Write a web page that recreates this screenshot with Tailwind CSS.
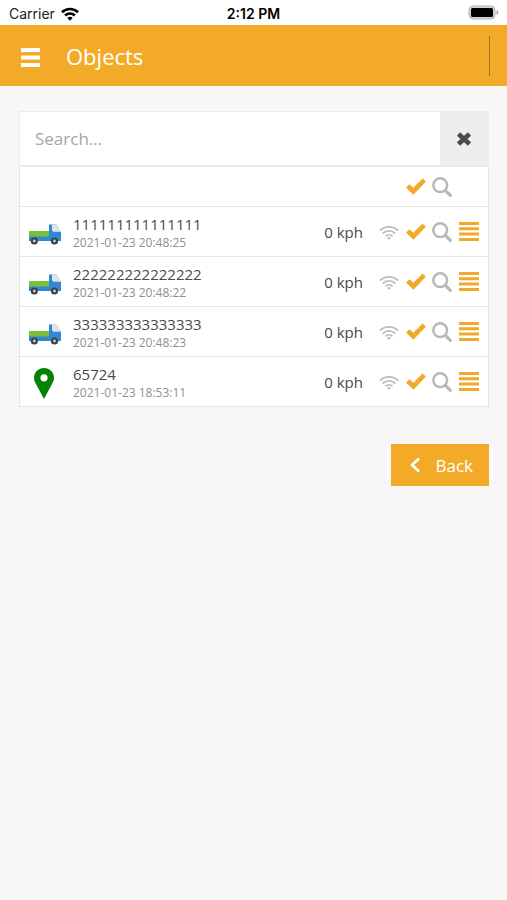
<!DOCTYPE html>
<html lang="en">
<head>
<meta charset="utf-8">
<meta name="viewport" content="width=device-width, initial-scale=1">
<title>Objects</title>
<script src="https://cdn.jsdelivr.net/npm/@tailwindcss/browser@4"></script>
</head>
<body class="min-h-screen bg-[#f7f7f7] font-['Open_Sans',sans-serif] text-[#4a4a4a]">

<svg class="hidden" aria-hidden="true">
  <symbol id="check" viewBox="0 0 20 17"><path d="M0.6 9.600 3.400 6.800 7.300 10.200 16.600 1 19.400 3.700 7.400 16.200Z" fill="#f2a929" stroke="#f2a929" stroke-width="1" stroke-linejoin="round"/></symbol>
  <symbol id="find" viewBox="0 0 20 20"><circle cx="8.2" cy="8.2" r="6.9" fill="none" stroke="#b8b8b8" stroke-width="2.500"/><path d="m13.400 13.400 4.900 4.900" stroke="#b8b8b8" stroke-width="3.200" stroke-linecap="round"/></symbol>
  <symbol id="list" viewBox="0 0 20 19"><path d="M0 1.500h20M0 6.800h20M0 12.100h20M0 17.400h20" stroke="#f2a929" stroke-width="3"/></symbol>
  <symbol id="wifi" viewBox="0 0 20 15"><g fill="none" stroke="#bcbcbc" stroke-width="1.800"><path d="M.9 5.600a13 13 0 0 1 18.200 0"/><path d="M3.700 8.500a9 9 0 0 1 12.600 0"/><path d="M6.500 11.300a5 5 0 0 1 7 0"/></g><circle cx="10" cy="13.200" r="1.400" fill="#bcbcbc"/></symbol>
  <symbol id="truck" viewBox="0 0 34 22"><path d="M1 8h20v6H1Z" fill="#7cc03a"/><path d="M21 1.500h7.500l4.500 7.500v9H1v-4.500h20Z" fill="#2f88d6"/><path d="M24 1.500h4.700l4.300 7.300h-7.400Q24 8.400 24 6.800Z" fill="#dfe4e8"/><g fill="#3d4146"><circle cx="6.300" cy="18" r="3.600"/><circle cx="26.500" cy="18" r="3.600"/></g><g fill="#c9cdd0"><circle cx="6.300" cy="18" r="1.400"/><circle cx="26.500" cy="18" r="1.400"/></g></symbol>
  <symbol id="pin" viewBox="0 0 20 31"><path fill="#058205" fill-rule="evenodd" d="M10 0C4.400 0 0 4.300 0 9.800c0 2.300.8 4.200 2 6.200L10 31l8-15c1.200-2 2-3.900 2-6.200C20 4.300 15.600 0 10 0Zm0 6.200a3.600 3.600 0 1 1 0 7.200 3.600 3.600 0 0 1 0-7.200Z"/></symbol>
</svg>

<div class="grid h-[25px] grid-cols-3 items-center bg-white px-2 text-black">
  <div class="flex items-center gap-1.5 pt-0.5 pl-px font-[Inter,sans-serif] text-sm text-[#222]">
    <span>Carrier</span>
    <svg class="h-[14px] w-[18px]" viewBox="0 0 18 14" aria-label="Wi-Fi"><g fill="none" stroke="#000" stroke-width="2.6"><path d="M1 5.200a11.500 11.500 0 0 1 16 0"/><path d="M4.100 8.500a7 7 0 0 1 9.800 0"/></g><path d="M9 13.800 6.300 11a3.900 3.900 0 0 1 5.400 0Z"/></svg>
  </div>
  <div class="pt-0.5 text-center font-[Inter,sans-serif] text-sm font-semibold">2:12 PM</div>
  <svg class="h-[15px] w-[31px] justify-self-end" viewBox="0 0 31 15" aria-label="Battery"><rect x="1" y="1" width="26" height="13" rx="4" fill="#d4d4d4" stroke="#b4b4b4"/><rect x="3" y="3" width="22" height="9" rx="1.500"/><path d="M28.500 5c2.500.5 2.500 4.500 0 5Z" fill="#aaa"/></svg>
</div>

<header class="flex h-[61px] items-center bg-[#f4aa29] pr-[17px] pl-[21px] text-white">
  <button type="button" aria-label="Menu" class="flex items-center pt-1">
    <svg class="h-[19px] w-[19px]" viewBox="0 0 19 19"><path d="M0 2h19M0 9.500h19M0 17h19" stroke="#fff" stroke-width="3.800"/></svg>
  </button>
  <h1 class="ml-[26px] flex-1 text-[22px] leading-8">Objects</h1>
  <div class="h-10 w-px bg-[#a3741f]"></div>
</header>

<main class="pt-[25px] pr-[18px] pl-[19px]">
  <form class="flex h-[56px] border border-b-2 border-[#ebebeb] bg-white">
    <input type="text" aria-label="Search objects" placeholder="Search..." class="min-w-0 flex-1 px-[15px] text-[17px] outline-none placeholder:text-[#a6a6a6]">
    <button type="reset" aria-label="Clear search" class="flex w-12 items-center justify-center bg-[#eee]">
      <svg class="h-4 w-4" viewBox="0 0 16 16"><path d="m2.500 3 11 10M13.500 3l-11 10" stroke="#4a4a4a" stroke-width="4.600"/></svg>
    </button>
  </form>

  <table class="w-full table-fixed border-separate border-spacing-0 border-x border-[#e6e6e6] bg-white">
    <colgroup><col class="w-[53px]"><col><col class="w-[80px]"><col class="w-[27px]"><col class="w-[27px]"><col class="w-[26px]"><col class="w-[33px]"></colgroup>
    <thead>
      <tr class="h-[40px] *:border-b *:border-[#e6e6e6] *:p-0">
        <td></td><td></td><td></td><td></td>
        <td><button type="button" aria-label="Select all" class="mx-auto block"><svg class="h-[17px] w-5"><use href="#check"/></svg></button></td>
        <td><button type="button" aria-label="Follow all" class="mx-auto block"><svg class="size-5"><use href="#find"/></svg></button></td>
        <td></td>
      </tr>
    </thead>
    <tbody id="rows"></tbody>
  </table>

  <div class="mt-[37px] flex justify-end">
    <button type="button" class="flex h-[42px] items-center gap-[15px] bg-[#f4aa29] pr-4 pl-[19px] text-[17px] text-white">
      <svg class="h-4 w-[10px]" viewBox="0 0 10 16"><path d="M9 1.500 2 8l7 6.500" fill="none" stroke="#fff" stroke-width="2.600"/></svg>
      <span class="pt-0.5">Back</span>
    </button>
  </div>
</main>

<script>
const objects = [
  ["111111111111111", "2021-01-23 20:48:25", "truck"],
  ["222222222222222", "2021-01-23 20:48:22", "truck"],
  ["333333333333333", "2021-01-23 20:48:23", "truck"],
  ["65724", "2021-01-23 18:53:11", "pin"]
];
const markers = {
  truck: '<svg class="ml-2 mt-1 h-[22px] w-[34px]"><use href="#truck"/></svg>',
  pin: '<svg class="ml-[14px] mt-1 h-[31px] w-5"><use href="#pin"/></svg>'
};
document.getElementById("rows").innerHTML = objects.map(([name, time, marker]) => `
  <tr class="h-[50px] *:border-b *:border-[#e6e6e6] *:p-0">
    <td>${markers[marker]}</td>
    <td class="pt-[2px]!"><div class="text-[15px] leading-5">${name}</div><div class="text-xs leading-[18px] text-[#8f8f8f]">${time}</div></td>
    <td class="pr-[12px]! text-right text-[15px] leading-5 whitespace-nowrap">0 kph</td>
    <td><svg class="mx-auto mt-[2px] h-[15px] w-5" role="img" aria-label="Signal"><use href="#wifi"/></svg></td>
    <td><button type="button" aria-label="Select ${name}" class="mx-auto block"><svg class="h-[17px] w-5"><use href="#check"/></svg></button></td>
    <td><button type="button" aria-label="Follow ${name}" class="mx-auto block"><svg class="size-5"><use href="#find"/></svg></button></td>
    <td><button type="button" aria-label="Menu for ${name}" class="ml-[4px] block"><svg class="h-[19px] w-5"><use href="#list"/></svg></button></td>
  </tr>`).join("");
</script>
</body>
</html>
